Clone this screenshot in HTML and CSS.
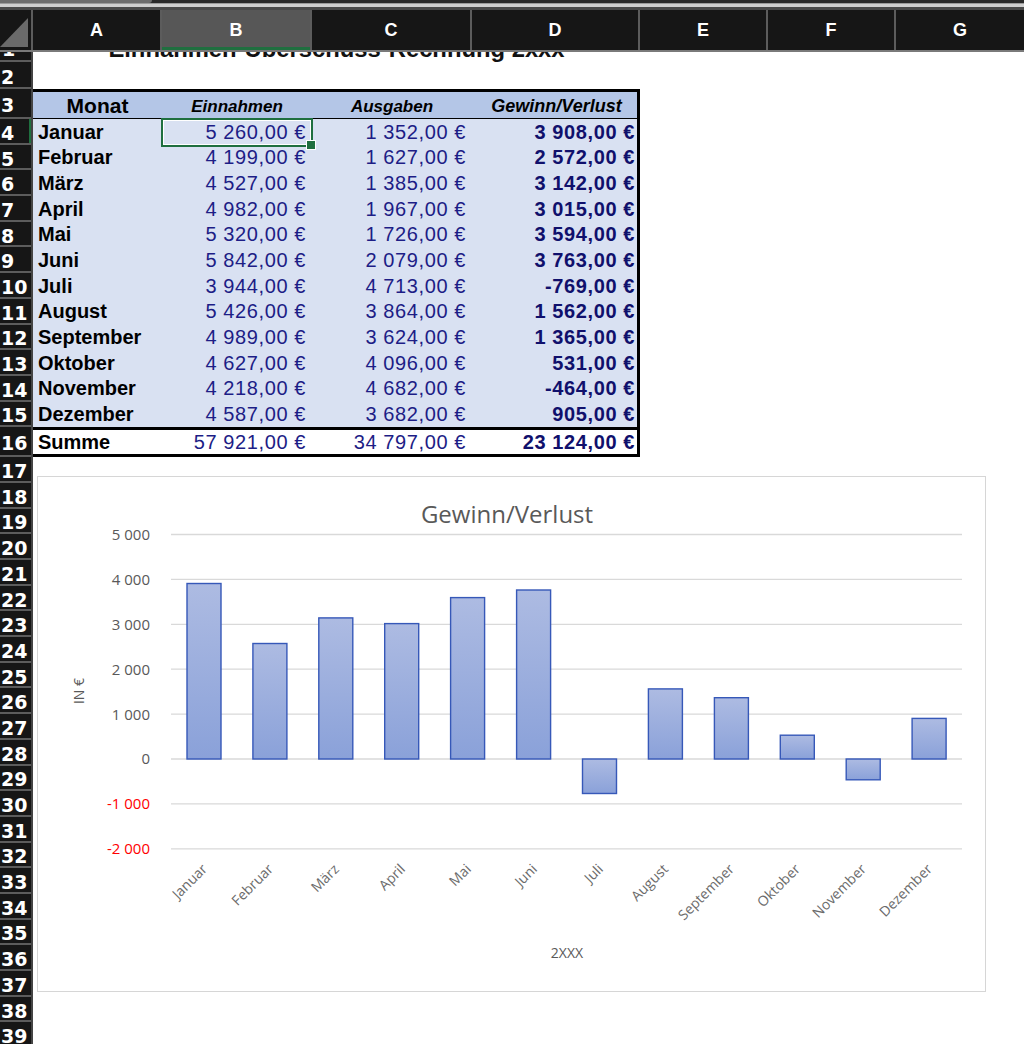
FILE: index.html
```html
<!DOCTYPE html>
<html lang="de">
<head>
    <meta charset="UTF-8">
    <title>Einnahmen-Überschuss-Rechnung 2xxx</title>
    <link rel="stylesheet" href="styles.css">
</head>
<body>
    <div class="topbar"></div>

    <div class="col-heads">
        <div class="corner"></div>
        <div class="col-head col-a">A</div>
        <div class="col-head col-b active">B</div>
        <div class="col-head col-c">C</div>
        <div class="col-head col-d">D</div>
        <div class="col-head col-e">E</div>
        <div class="col-head col-f">F</div>
        <div class="col-head col-g">G</div>
    </div>

    <div class="sheet">
        <div class="row-heads">
            <div class="row-head r1"><span>1</span></div>
            <div class="row-head r2">2</div>
            <div class="row-head r3">3</div>
            <div class="row-head active">4</div>
            <div class="row-head">5</div>
            <div class="row-head">6</div>
            <div class="row-head">7</div>
            <div class="row-head">8</div>
            <div class="row-head">9</div>
            <div class="row-head">10</div>
            <div class="row-head">11</div>
            <div class="row-head">12</div>
            <div class="row-head">13</div>
            <div class="row-head">14</div>
            <div class="row-head">15</div>
            <div class="row-head r16">16</div>
            <div class="row-head">17</div>
            <div class="row-head">18</div>
            <div class="row-head">19</div>
            <div class="row-head">20</div>
            <div class="row-head">21</div>
            <div class="row-head">22</div>
            <div class="row-head">23</div>
            <div class="row-head">24</div>
            <div class="row-head">25</div>
            <div class="row-head">26</div>
            <div class="row-head">27</div>
            <div class="row-head">28</div>
            <div class="row-head">29</div>
            <div class="row-head">30</div>
            <div class="row-head">31</div>
            <div class="row-head">32</div>
            <div class="row-head">33</div>
            <div class="row-head">34</div>
            <div class="row-head">35</div>
            <div class="row-head">36</div>
            <div class="row-head">37</div>
            <div class="row-head">38</div>
            <div class="row-head">39</div>
        </div>

        <div class="cells">
            <div class="title-row"><span>Einnahmen-Überschuss-Rechnung 2xxx</span></div>
            <div class="blank-row"></div>

            <table class="euer">
                <colgroup>
                    <col class="w-a">
                    <col class="w-b">
                    <col class="w-c">
                    <col class="w-d">
                </colgroup>
                <thead>
                    <tr>
                        <th class="monat">Monat</th>
                        <th class="sub">Einnahmen</th>
                        <th class="sub">Ausgaben</th>
                        <th class="sub gv">Gewinn/Verlust</th>
                    </tr>
                </thead>
                <tbody>
                    <tr><td class="m">Januar</td><td class="v selected">5 260,00 €</td><td class="v">1 352,00 €</td><td class="g">3 908,00 €</td></tr>
                    <tr><td class="m">Februar</td><td class="v">4 199,00 €</td><td class="v">1 627,00 €</td><td class="g">2 572,00 €</td></tr>
                    <tr><td class="m">März</td><td class="v">4 527,00 €</td><td class="v">1 385,00 €</td><td class="g">3 142,00 €</td></tr>
                    <tr><td class="m">April</td><td class="v">4 982,00 €</td><td class="v">1 967,00 €</td><td class="g">3 015,00 €</td></tr>
                    <tr><td class="m">Mai</td><td class="v">5 320,00 €</td><td class="v">1 726,00 €</td><td class="g">3 594,00 €</td></tr>
                    <tr><td class="m">Juni</td><td class="v">5 842,00 €</td><td class="v">2 079,00 €</td><td class="g">3 763,00 €</td></tr>
                    <tr><td class="m">Juli</td><td class="v">3 944,00 €</td><td class="v">4 713,00 €</td><td class="g">-769,00 €</td></tr>
                    <tr><td class="m">August</td><td class="v">5 426,00 €</td><td class="v">3 864,00 €</td><td class="g">1 562,00 €</td></tr>
                    <tr><td class="m">September</td><td class="v">4 989,00 €</td><td class="v">3 624,00 €</td><td class="g">1 365,00 €</td></tr>
                    <tr><td class="m">Oktober</td><td class="v">4 627,00 €</td><td class="v">4 096,00 €</td><td class="g">531,00 €</td></tr>
                    <tr><td class="m">November</td><td class="v">4 218,00 €</td><td class="v">4 682,00 €</td><td class="g">-464,00 €</td></tr>
                    <tr><td class="m">Dezember</td><td class="v">4 587,00 €</td><td class="v">3 682,00 €</td><td class="g">905,00 €</td></tr>
                </tbody>
                <tfoot>
                    <tr><td class="m">Summe</td><td class="v">57 921,00 €</td><td class="v">34 797,00 €</td><td class="g">23 124,00 €</td></tr>
                </tfoot>
            </table>

            <div class="chart">
                <svg class="chart-svg" width="949" height="516" viewBox="37 476 949 516">
                    <defs>
                        <linearGradient id="barFill" x1="0" y1="0" x2="0" y2="1">
                            <stop offset="0" stop-color="#adbbe2"/>
                            <stop offset="1" stop-color="#8aa1d9"/>
                        </linearGradient>
                    </defs>

                    <text class="chart-title" x="507" y="523">Gewinn/Verlust</text>

                    <g class="grid">
                        <line x1="171" y1="534.5" x2="962" y2="534.5"/>
                        <line x1="171" y1="579.4" x2="962" y2="579.4"/>
                        <line x1="171" y1="624.3" x2="962" y2="624.3"/>
                        <line x1="171" y1="669.2" x2="962" y2="669.2"/>
                        <line x1="171" y1="714.1" x2="962" y2="714.1"/>
                        <line x1="171" y1="759" x2="962" y2="759"/>
                        <line x1="171" y1="803.9" x2="962" y2="803.9"/>
                        <line x1="171" y1="848.8" x2="962" y2="848.8"/>
                    </g>

                    <g class="y-labels">
                        <text x="150" y="540">5 000</text>
                        <text x="150" y="585">4 000</text>
                        <text x="150" y="630">3 000</text>
                        <text x="150" y="675">2 000</text>
                        <text x="150" y="720">1 000</text>
                        <text x="150" y="764">0</text>
                        <text class="neg" x="150" y="809">-1 000</text>
                        <text class="neg" x="150" y="854">-2 000</text>
                    </g>

                    <text class="axis-title" x="84" y="691" transform="rotate(-90 84 691)">IN €</text>

                    <g class="bars">
                        <rect x="187" y="583.5" width="34" height="175.5"/>
                        <rect x="252.9" y="643.5" width="34" height="115.5"/>
                        <rect x="318.8" y="617.9" width="34" height="141.1"/>
                        <rect x="384.7" y="623.6" width="34" height="135.4"/>
                        <rect x="450.6" y="597.6" width="34" height="161.4"/>
                        <rect x="516.6" y="590" width="34" height="169"/>
                        <rect x="582.5" y="759" width="34" height="34.5"/>
                        <rect x="648.4" y="688.9" width="34" height="70.1"/>
                        <rect x="714.4" y="697.7" width="34" height="61.3"/>
                        <rect x="780.3" y="735.2" width="34" height="23.8"/>
                        <rect x="846.2" y="759" width="34" height="20.8"/>
                        <rect x="912.1" y="718.4" width="34" height="40.6"/>
                    </g>

                    <g class="x-labels">
                        <text x="208" y="870" transform="rotate(-45 208 870)">Januar</text>
                        <text x="274" y="870" transform="rotate(-45 274 870)">Februar</text>
                        <text x="340" y="870" transform="rotate(-45 340 870)">März</text>
                        <text x="406" y="870" transform="rotate(-45 406 870)">April</text>
                        <text x="472" y="870" transform="rotate(-45 472 870)">Mai</text>
                        <text x="538" y="870" transform="rotate(-45 538 870)">Juni</text>
                        <text x="604" y="870" transform="rotate(-45 604 870)">Juli</text>
                        <text x="669" y="870" transform="rotate(-45 669 870)">August</text>
                        <text x="735" y="870" transform="rotate(-45 735 870)">September</text>
                        <text x="801" y="870" transform="rotate(-45 801 870)">Oktober</text>
                        <text x="867" y="870" transform="rotate(-45 867 870)">November</text>
                        <text x="933" y="870" transform="rotate(-45 933 870)">Dezember</text>
                    </g>

                    <text class="axis-title" x="567" y="958">2XXX</text>
                </svg>
            </div>
        </div>
    </div>
</body>
</html>
```

FILE: styles.css
```css
:root {
    --head-bg: #161616;
    --head-line: #5c5c5c;
    --excel-green: #1f6f3f;
    --navy: #1d1d86;
    --navy-bold: #10106c;
    --band-head: #b4c6e7;
    --band-row: #d9e1f2;
    --chart-text: #595959;
}
body {
    margin: 0;
    background: #fff;
    font-family: 'Liberation Sans', Arial, sans-serif;
    overflow: hidden;
    width: 1024px;
    height: 1044px;
}

/* window chrome above the column letters */
.topbar {
    height: 10px;
    background: linear-gradient(#2a2a2a 0 3px, #9b9b9b 3px 4px, #cfcfcf 4px 7px, #4a4a4a 7px);
    position: relative;
}
.topbar::before {
    content: "";
    position: absolute;
    left: 0;
    top: 0;
    width: 152px;
    height: 3px;
    background: #6d6d6d;
    border-radius: 0 0 3px 0;
}

/* column letters */
.col-heads {
    display: flex;
    height: 42px;
    background: var(--head-bg);
    border-bottom: 2px solid #7a7a7a;
    box-sizing: border-box;
}
.corner {
    width: 33px;
    border-right: 2px solid var(--head-line);
    box-sizing: border-box;
    position: relative;
}
.corner::after {
    content: "";
    position: absolute;
    left: 0;
    right: 3px;
    top: 8px;
    bottom: 3px;
    background: #6a6a6a;
    clip-path: polygon(100% 0, 100% 100%, 0 100%);
}
.col-head {
    box-sizing: border-box;
    border-right: 2px solid var(--head-line);
    color: #fff;
    font-weight: bold;
    font-size: 18px;
    display: flex;
    align-items: center;
    justify-content: center;
}
.col-a { width: 129px; }
.col-b { width: 150px; }
.col-c { width: 160px; }
.col-d { width: 168px; }
.col-e { width: 128px; }
.col-f { width: 128px; }
.col-g { flex: 1; border-right: none; }
.col-head.active {
    background: #575757;
    box-shadow: inset 0 -3px 0 var(--excel-green);
}

/* row numbers + cell area */
.sheet {
    display: flex;
}
.row-heads {
    width: 33px;
    flex-shrink: 0;
    background: var(--head-bg);
    border-right: 2px solid #444;
    box-sizing: border-box;
}
.row-head {
    height: 25.7px;
    box-sizing: border-box;
    border-bottom: 2px solid var(--head-line);
    color: #fff;
    font-family: 'DejaVu Sans', sans-serif;
    font-weight: bold;
    font-size: 19px;
    display: flex;
    align-items: center;
    padding: 4px 0 0 1px;
    overflow: hidden;
}
.row-head.r1 {
    height: 10px;
    display: block;
    padding: 0;
}
.row-head.r1 span {
    display: block;
    line-height: 20px;
    margin-top: -13px;
    padding-left: 2px;
}
.row-head.r2 { height: 27px; }
.row-head.r3 { height: 30px; }
.row-head.r16 { height: 30px; }
.row-head.active {
    box-shadow: inset -2px 0 0 var(--excel-green);
}

.cells {
    flex: 1;
}
.title-row {
    width: 607px;
    height: 10px;
    overflow: hidden;
    text-align: center;
}
.title-row span {
    display: block;
    font-size: 23.8px;
    font-weight: bold;
    line-height: 23px;
    margin-top: -15px;
    color: #111;
}
.blank-row {
    height: 27px;
}

/* the EÜR table */
.euer {
    width: 607px;
    table-layout: fixed;
    border-collapse: separate;
    border-spacing: 0;
    border-top: 3px solid #000;
    border-right: 3px solid #000;
}
.w-a { width: 129px; }
.w-b { width: 150px; }
.w-c { width: 160px; }
.w-d { width: 165px; }
.euer thead tr { height: 27px; }
.euer tbody tr { height: 25.67px; }
.euer tfoot tr { height: 30px; }
.euer th {
    background: var(--band-head);
    border-bottom: 1px solid #000;
    padding: 0;
    color: #000;
    vertical-align: bottom;
}
.euer th.monat {
    font-size: 21px;
}
.euer th.sub {
    font-size: 17px;
    font-style: italic;
    padding-bottom: 1px;
}
.euer th.gv {
    font-size: 18px;
    padding-left: 4px;
}
.euer tbody td {
    background: var(--band-row);
}
.euer td {
    padding: 0 0 1px;
    white-space: nowrap;
    font-size: 20px;
    vertical-align: bottom;
}
.euer td.m {
    font-weight: bold;
    padding-left: 5px;
    color: #000;
}
.euer td.v {
    text-align: right;
    padding-right: 6px;
    color: var(--navy);
    letter-spacing: 0.6px;
}
.euer td.g {
    text-align: right;
    padding-right: 2px;
    font-weight: bold;
    color: var(--navy-bold);
    letter-spacing: 0.6px;
}
.euer tfoot td {
    background: #fff;
    border-top: 3px solid #000;
    border-bottom: 3px solid #000;
    padding-bottom: 0;
}
.euer td.selected {
    position: relative;
}
.euer td.selected::after {
    content: "";
    position: absolute;
    left: -1px;
    right: -1px;
    top: -1px;
    bottom: -2px;
    border: 2px solid var(--excel-green);
    box-shadow: inset 0 0 0 1px #fff;
}
.euer td.selected::before {
    content: "";
    position: absolute;
    right: -4px;
    bottom: -5px;
    width: 8px;
    height: 8px;
    background: var(--excel-green);
    border: 1px solid #fff;
    z-index: 1;
}

/* chart object */
.chart {
    margin: 19px 0 0 4px;
    width: 949px;
    height: 516px;
    box-sizing: border-box;
    border: 1px solid #d6d6d6;
    background: #fff;
    overflow: hidden;
}
.chart-svg {
    display: block;
    margin: -1px;
    font-family: 'Open Sans', sans-serif;
}
.chart-title {
    font-size: 24px;
    fill: var(--chart-text);
    text-anchor: middle;
}
.grid line {
    stroke: #d9d9d9;
    stroke-width: 1.3;
}
.y-labels text {
    font-size: 15px;
    fill: var(--chart-text);
    text-anchor: end;
}
.y-labels text.neg {
    fill: #ff0000;
}
.axis-title {
    font-size: 14px;
    fill: var(--chart-text);
    text-anchor: middle;
}
.bars rect {
    fill: url(#barFill);
    stroke: #3658b8;
    stroke-width: 1.4;
}
.x-labels text {
    font-size: 14px;
    fill: #6b6b6b;
    text-anchor: end;
}
```
